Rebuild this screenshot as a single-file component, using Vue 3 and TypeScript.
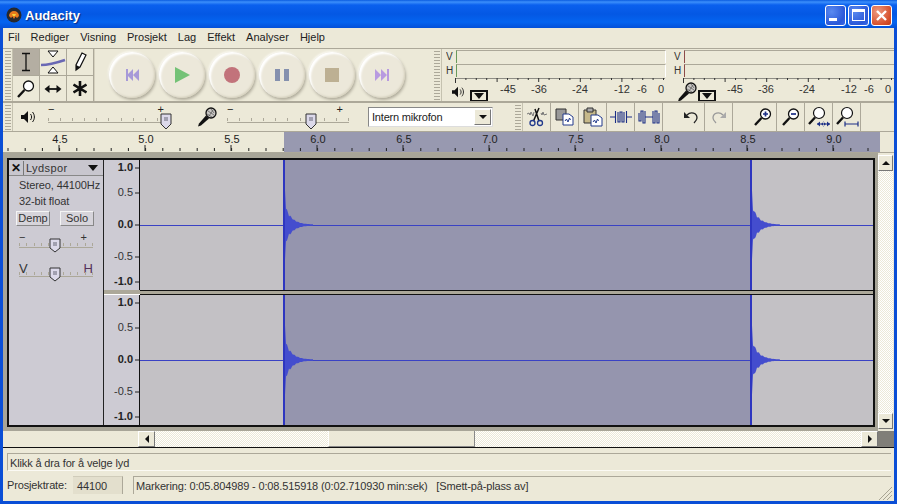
<script setup lang="ts">
const menus = ["Fil", "Rediger", "Visning", "Prosjekt", "Lag", "Effekt", "Analyser", "Hjelp"];
const meterLabels = [
  { t: "-45", x: 66 },
  { t: "-36", x: 97 },
  { t: "-24", x: 138 },
  { t: "-12", x: 180 },
  { t: "-6", x: 200 },
  { t: "0", x: 219 },
];
const meterTicks = Array.from({ length: 21 }, (_, i) => i * 10.4);

// ruler: 86px per half second, 4.5 sits at x=59
const rulerLabels = [4.5, 5, 5.5, 6, 6.5, 7, 7.5, 8, 8.5, 9].map((v, i) => ({
  text: v.toFixed(1),
  x: 59 + i * 86,
}));
const rulerTicks = Array.from({ length: 52 }, (_, i) => 8 + i * 17.2);
const sliderTicks = [0, 1, 2, 3, 4, 5, 6, 7, 8, 9, 10];

const axis = [
  { text: "1.0", y: 7, bold: true },
  { text: "0.5", y: 32, bold: false },
  { text: "0.0", y: 64, bold: true },
  { text: "-0.5", y: 96, bold: false },
  { text: "-1.0", y: 121, bold: true },
];

// decaying click, mirrored around the centre line
function spike(x0: number, seed: number) {
  const top: string[] = [];
  const bottom: string[] = [];
  for (let i = 0; i < 30; i++) {
    const env = i < 2 ? 34 : 24 * Math.exp(-i / 6.5);
    const wob = i < 2 ? 1 : 0.72 + 0.28 * Math.abs(Math.sin(i * 2.3 + seed));
    const h = Number((env * wob + 0.4).toFixed(1));
    top.push(`${x0 + i},${65 - h}`);
    bottom.unshift(`${x0 + i},${65 + h}`);
  }
  return [...top, ...bottom].join(" ");
}
const spikes = [spike(144, 1), spike(611, 2)];
</script>

<template>
  <div class="window">
    <header class="titlebar">
      <svg class="app-icon" width="16" height="16" viewBox="0 0 16 16">
        <circle cx="8" cy="8" r="7.5" fill="#26282e" />
        <path d="M3 9a5 5 0 0 1 10 0l-2 2-1.500-1.500L8 12 6.500 9.500 5 11z" fill="#e8791c" />
        <path d="M6 7h4l-1 2H7z" fill="#f6d53a" />
      </svg>
      <span class="title">Audacity</span>
      <div class="win-buttons">
        <button class="win-btn"><i class="min"></i></button>
        <button class="win-btn"><i class="max"></i></button>
        <button class="win-btn close">
          <svg width="13" height="13" viewBox="0 0 13 13"><path d="M2 2l9 9M11 2l-9 9" stroke="#fff" stroke-width="2.400" /></svg>
        </button>
      </div>
    </header>

    <div class="client">
      <nav class="menubar">
        <span v-for="m in menus" :key="m">{{ m }}</span>
      </nav>

      <div class="row-one">
        <div class="grip"></div>
        <div class="tools">
          <button class="tool active">
            <svg width="14" height="20" viewBox="0 0 14 20"><path d="M3 1.500h8M3 18.500h8M7 1.500v17" stroke="#111" stroke-width="1.300" fill="none" /></svg>
          </button>
          <button class="tool">
            <svg width="26" height="24" viewBox="0 0 26 24">
              <path d="M8 1h10l-5 6zM8 23h10l-5-6z" fill="#fff" stroke="#111" />
              <path d="M1 15c8 0 15-2 24-5" stroke="#6a68b4" stroke-width="2.600" fill="none" />
            </svg>
          </button>
          <button class="tool">
            <svg width="14" height="20" viewBox="0 0 14 20"><path d="M9 1l4 2-6 12-4 3 0-5z" fill="#fff" stroke="#111" stroke-width="1.200" /><path d="M3 13l4 2-4 3z" fill="#111" /></svg>
          </button>
          <button class="tool">
            <svg width="20" height="20" viewBox="0 0 20 20"><circle cx="12.500" cy="7" r="5" fill="#fff" stroke="#111" stroke-width="1.300" /><path d="M8.500 11L2 18" stroke="#111" stroke-width="2.400" /></svg>
          </button>
          <button class="tool">
            <svg width="18" height="10" viewBox="0 0 18 10"><path d="M4 5h10" stroke="#111" stroke-width="1.800" /><path d="M0.500 5L5.500 1v8zM17.500 5l-5-4v8z" fill="#111" /></svg>
          </button>
          <button class="tool">
            <svg width="14" height="15" viewBox="0 0 14 15"><path d="M7 0v15M0.500 3.500l13 8M13.500 3.500l-13 8" stroke="#111" stroke-width="2.600" /></svg>
          </button>
        </div>

        <div class="transport">
          <button class="round">
            <svg width="14" height="14" viewBox="0 0 14 14"><path d="M1 1h2v12H1zM14 1v12L8 7zM8 1v12L2 7z" fill="#a79ad8" /></svg>
          </button>
          <button class="round">
            <svg width="16" height="16" viewBox="0 0 16 16"><path d="M1 0l15 8-15 8z" fill="#74c276" /></svg>
          </button>
          <button class="round">
            <svg width="16" height="16" viewBox="0 0 16 16"><circle cx="8" cy="8" r="8" fill="#c2737b" /></svg>
          </button>
          <button class="round">
            <svg width="14" height="14" viewBox="0 0 14 14"><path d="M0 1h5v12H0zM9 1h5v12H9z" fill="#8590ae" /></svg>
          </button>
          <button class="round">
            <svg width="14" height="14" viewBox="0 0 14 14"><rect width="14" height="14" fill="#bdb093" /></svg>
          </button>
          <button class="round">
            <svg width="14" height="14" viewBox="0 0 14 14"><path d="M0 1v12l6-6zM6 1v12l6-6zM12 1h2v12h-2z" fill="#b89ae0" /></svg>
          </button>
        </div>

        <div class="grip meter-grip"></div>

        <div class="meter-group">
          <div class="meter">
            <div class="meter-bars">
              <div class="bar-row"><span>V</span><div class="bar green"></div></div>
              <div class="bar-row"><span>H</span><div class="bar green"></div></div>
            </div>
            <svg class="meter-scale" width="240" height="26" viewBox="0 0 240 26">
              <path d="M13.500 0v5M13.500 0H223" stroke="#333" fill="none" />
              <path v-for="t in meterTicks" :key="t" :d="`M${13.500 + t} 0v${t % 41.6 < 0.01 ? 4 : 2}`" stroke="#333" />
              <text v-for="l in meterLabels" :key="l.t" :x="l.x" y="15" class="scale-text">{{ l.t }}</text>
            </svg>
            <svg class="meter-icon speaker" width="12" height="12" viewBox="0 0 14 14">
              <path d="M0 5h3l4-4v12l-4-4H0z" fill="#111" /><path d="M9.500 4c1.500 2 1.500 4 0 6M11.500 2c2.500 3 2.500 7 0 10" stroke="#111" fill="none" />
            </svg>
            <div class="drop"><i></i></div>
          </div>
          <div class="meter second">
            <div class="meter-bars">
              <div class="bar-row"><span>V</span><div class="bar red"></div></div>
              <div class="bar-row"><span>H</span><div class="bar red"></div></div>
            </div>
            <svg class="meter-scale" width="240" height="26" viewBox="0 0 240 26">
              <path d="M13.500 0v5M13.500 0H240" stroke="#333" fill="none" />
              <path v-for="t in meterTicks" :key="t" :d="`M${13.500 + t} 0v${t % 41.6 < 0.01 ? 4 : 2}`" stroke="#333" />
              <text v-for="l in meterLabels" :key="l.t" :x="l.x - 1" y="15" class="scale-text">{{ l.t }}</text>
            </svg>
            <svg class="meter-icon mic" width="20" height="20" viewBox="0 0 20 20">
              <path d="M1 19.500l1-3 7-8 3 3-8 7z" fill="#111" />
              <circle cx="14" cy="6" r="5" fill="#c9c7c4" stroke="#111" stroke-width="1.300" />
              <path d="M11 4l6 4M12 9l4-6M10 7l5 3M14 2l3 4" stroke="#555" stroke-width="0.700" />
            </svg>
            <div class="drop"><i></i></div>
          </div>
        </div>
      </div>

      <div class="row-two">
        <div class="grip"></div>
        <svg class="vol-icon" width="14" height="14" viewBox="0 0 14 14">
          <path d="M0 5h3l4-4v12l-4-4H0z" fill="#111" /><path d="M9.500 4c1.500 2 1.500 4 0 6M11.500 2c2.500 3 2.500 7 0 10" stroke="#111" fill="none" />
        </svg>
        <div class="slider out-slider">
          <span class="sign minus">−</span><span class="sign plus">+</span>
          <div class="slider-track"><i v-for="n in sliderTicks" :key="n"></i></div>
          <svg class="thumb out-thumb" width="12" height="17" viewBox="0 0 12 17"><path d="M1 1h10v10l-5 5-5-5z" fill="#dcd9ea" stroke="#333" /><path d="M4 5h4M4 7h4" stroke="#667" /></svg>
        </div>
        <svg class="mic-icon" width="20" height="20" viewBox="0 0 20 20">
          <path d="M1 19.500l1-3 7-8 3 3-8 7z" fill="#111" />
          <circle cx="14" cy="6" r="5" fill="#c9c7c4" stroke="#111" stroke-width="1.300" />
          <path d="M11 4l6 4M12 9l4-6M10 7l5 3M14 2l3 4" stroke="#555" stroke-width="0.700" />
        </svg>
        <div class="slider in-slider">
          <span class="sign minus">−</span><span class="sign plus">+</span>
          <div class="slider-track"><i v-for="n in sliderTicks" :key="n"></i></div>
          <svg class="thumb in-thumb" width="12" height="17" viewBox="0 0 12 17"><path d="M1 1h10v10l-5 5-5-5z" fill="#dcd9ea" stroke="#333" /><path d="M4 5h4M4 7h4" stroke="#667" /></svg>
        </div>
        <div class="combo">
          <span>Intern mikrofon</span>
          <div class="combo-btn"><i></i></div>
        </div>
        <div class="grip edit-grip"></div>
        <div class="edit-buttons">
          <button class="edit">
            <svg width="20" height="20" viewBox="0 0 20 20">
              <path d="M0 7l2-1 1 2 1-3 2 4 1-4M14 6l1 2 1-3 1 3 3-1" stroke="#777" fill="none" />
              <path d="M12 1L6.500 14M8 2l4 12" stroke="#111" stroke-width="1.500" />
              <circle cx="5.500" cy="16" r="2.500" fill="none" stroke="#223a8c" stroke-width="1.300" /><circle cx="13" cy="16" r="2.500" fill="none" stroke="#223a8c" stroke-width="1.300" />
            </svg>
          </button>
          <button class="edit">
            <svg width="20" height="18" viewBox="0 0 20 18">
              <path d="M1 1h10v11H1z" fill="#999" stroke="#333" /><path d="M8 6h6l4 3v8H8z" fill="#fff" stroke="#223a8c" />
              <path d="M10 13l1.500-2 1.500 3 1.500-4 1 2" stroke="#223a8c" fill="none" />
            </svg>
          </button>
          <button class="edit">
            <svg width="20" height="20" viewBox="0 0 20 20">
              <path d="M1 3h12v13H1z" fill="#c6b98a" stroke="#333" /><path d="M4 1h6v4H4z" fill="#aaa" stroke="#333" />
              <path d="M8 8h7l4 3v8H8z" fill="#fff" stroke="#223a8c" /><path d="M10 15l1.500-2 1.500 3 1.500-4 1 2" stroke="#223a8c" fill="none" />
            </svg>
          </button>
          <button class="edit">
            <svg width="22" height="16" viewBox="0 0 22 16"><path d="M0 8h5M17 8h5M5.500 2v12M16.500 2v12M8 3v10h2V3h2v10h2V3" stroke="#1c2f86" stroke-width="1.100" fill="none" /></svg>
          </button>
          <button class="edit">
            <svg width="22" height="16" viewBox="0 0 22 16"><path d="M7 8h8M1 4v8h2V2h2v12h2V2M15 2v12h2V2h2v12h2V4" stroke="#1c2f86" stroke-width="1.100" fill="none" /></svg>
          </button>
        </div>
        <div class="edit-buttons undo-group">
          <button class="edit">
            <svg width="16" height="14" viewBox="0 0 16 14"><path d="M4 5c4-4 10-2 10 3 0 2-1 3-3 5" stroke="#222" stroke-width="1.300" fill="none" /><path d="M1 2v6h6z" fill="#222" /></svg>
          </button>
          <button class="edit">
            <svg width="16" height="14" viewBox="0 0 16 14"><path d="M12 5C8 1 2 3 2 8c0 2 1 3 3 5" stroke="#999" stroke-width="1.300" fill="none" /><path d="M15 2v6H9z" fill="#aaa" /></svg>
          </button>
        </div>
        <div class="edit-buttons zoom-group">
          <button class="edit">
            <svg width="20" height="20" viewBox="0 0 20 20"><circle cx="12.500" cy="7" r="5" fill="#fff" stroke="#111" stroke-width="1.300" /><path d="M10 7h5M12.500 4.500v5" stroke="#1c2f86" stroke-width="1.700" /><path d="M8.500 11L2 18" stroke="#111" stroke-width="2.400" /></svg>
          </button>
          <button class="edit">
            <svg width="20" height="20" viewBox="0 0 20 20"><circle cx="12.500" cy="7" r="5" fill="#fff" stroke="#111" stroke-width="1.300" /><path d="M10 7h5" stroke="#1c2f86" stroke-width="1.700" /><path d="M8.500 11L2 18" stroke="#111" stroke-width="2.400" /></svg>
          </button>
          <button class="edit">
            <svg width="24" height="22" viewBox="0 0 24 22"><circle cx="12" cy="7" r="5.500" fill="#fff" stroke="#111" stroke-width="1.200" /><path d="M8 11.500L2 18" stroke="#111" stroke-width="2.400" /><path d="M10 18h13" stroke="#1c2f86" /><path d="M14 18l3-2.500v5zM19 18l-3-2.500v5zM10 18l3-2.500v5zM23 18l-3-2.500v5z" fill="#1c2f86" /></svg>
          </button>
          <button class="edit">
            <svg width="24" height="22" viewBox="0 0 24 22"><circle cx="12" cy="7" r="5.500" fill="#fff" stroke="#111" stroke-width="1.200" /><path d="M8 11.500L2 18" stroke="#111" stroke-width="2.400" /><path d="M10 18h13M10 15.500v5M23 15.500v5" stroke="#1c2f86" stroke-width="1.200" /></svg>
          </button>
        </div>
      </div>

      <div class="ruler-row">
        <svg class="ruler" width="877" height="20" viewBox="0 0 877 20">
          <rect x="281" y="0" width="596" height="20" fill="#9899b0" />
          <path v-for="t in rulerTicks" :key="t" :d="`M${t - 3} 16v3`" stroke="#222" />
          <path v-for="l in rulerLabels" :key="l.text" :d="`M${l.x - 3} 13v6`" stroke="#222" />
          <text v-for="l in rulerLabels" :key="l.text" :x="l.x - 2" y="11" class="ruler-text">{{ l.text }}</text>
        </svg>
      </div>

      <div class="main">
        <div class="track-area">
          <div class="track">
            <div class="label-panel">
              <div class="label-head">
                <span class="close-x">✕</span>
                <span class="track-name">Lydspor</span>
                <i class="track-arrow"></i>
              </div>
              <p class="info">Stereo, 44100Hz</p>
              <p class="info">32-bit float</p>
              <div class="mute-solo">
                <button>Demp</button>
                <button>Solo</button>
              </div>
              <div class="slider gain">
                <span class="sign minus">−</span><span class="sign plus">+</span>
                <div class="slider-track short"><i v-for="n in sliderTicks" :key="n"></i></div>
                <svg class="thumb mid-thumb" width="12" height="15" viewBox="0 0 12 15"><path d="M1 1h10v9l-5 4-5-4z" fill="#dcd9ea" stroke="#333" /><path d="M4 5h4M4 7h4" stroke="#667" /></svg>
              </div>
              <div class="slider pan">
                <span class="pan-v">V</span><span class="pan-h">H</span>
                <div class="slider-track short"><i v-for="n in sliderTicks" :key="n"></i></div>
                <svg class="thumb mid-thumb" width="12" height="15" viewBox="0 0 12 15"><path d="M1 1h10v9l-5 4-5-4z" fill="#dcd9ea" stroke="#333" /><path d="M4 5h4M4 7h4" stroke="#667" /></svg>
              </div>
            </div>

            <div class="channels">
              <template v-for="ch in [0, 1]" :key="ch">
                <div class="channel">
                  <div class="vruler">
                    <svg width="36" height="130" viewBox="0 0 36 130">
                      <text v-for="a in axis" :key="a.text" x="29" :y="a.y + 4" text-anchor="end" class="axis-text" :class="{ strong: a.bold }">{{ a.text }}</text>
                      <path v-for="a in axis" :key="a.y" :d="`M31 ${a.y + 1}h5`" stroke="#222" />
                    </svg>
                  </div>
                  <svg class="wave" width="733" height="130" viewBox="0 0 733 130">
                    <rect width="733" height="130" fill="#c3c1c5" />
                    <rect x="144" width="467" height="130" fill="#9595ae" />
                    <path d="M0 65.500h733" stroke="#3a42c4" />
                    <polygon v-for="(s, i) in spikes" :key="i" :points="s" fill="#444dce" />
                    <path d="M144 0v130M611 0v130" stroke="#2e36c0" stroke-width="2" />
                  </svg>
                </div>
                <div v-if="ch === 0" class="divider">
                  <div class="divider-ruler"></div>
                  <div class="divider-wave"></div>
                </div>
              </template>
            </div>
          </div>
        </div>
        <div class="vscroll">
          <button class="sb-btn"><i class="up"></i></button>
          <div class="dither fill"></div>
          <button class="sb-btn"><i class="down"></i></button>
        </div>
      </div>

      <div class="hscroll">
        <div class="hscroll-pad"></div>
        <button class="sb-btn wide"><i class="left"></i></button>
        <div class="dither track-left"></div>
        <div class="sb-thumb"></div>
        <div class="dither fill"></div>
        <button class="sb-btn wide"><i class="right"></i></button>
        <div class="sb-corner"></div>
      </div>

      <div class="status">
        <div class="status-line">Klikk å dra for å velge lyd</div>
        <div class="status-bottom">
          <span class="rate-label">Prosjektrate:</span>
          <span class="rate-box">44100</span>
          <span class="sel-box">Markering: 0:05.804989 - 0:08.515918 (0:02.710930 min:sek) &nbsp; [Smett-på-plass av]</span>
        </div>
        <svg class="resize" width="18" height="18" viewBox="0 0 18 18">
          <path d="M4 17L17 4M8 17l9-9M12 17l5-5" stroke="#a8a594" fill="none" />
        </svg>
      </div>
    </div>
  </div>
</template>

<style>
html,
body {
  margin: 0;
  padding: 0;
}
</style>

<style scoped>
.window {
  width: 897px;
  height: 504px;
  display: flex;
  flex-direction: column;
  overflow: hidden;
  background: #0a4ed6;
  font-family: "Liberation Sans", Arial, sans-serif;
  font-size: 11px;
  color: #222;
}

button {
  padding: 0;
  border: 0;
  background: none;
  font: inherit;
  color: inherit;
}

p {
  margin: 0;
}

.titlebar {
  height: 28px;
  flex: 0 0 auto;
  display: flex;
  align-items: center;
  padding: 2px 5px 0 6px;
  box-sizing: border-box;
  background: linear-gradient(#0a5ce0 0, #3c8ffb 2px, #0a60ee 5px, #0458e4 14px, #0464f0 22px, #0350d8 28px);
}

.app-icon {
  margin-right: 3px;
}

.title {
  color: #fff;
  font-size: 13px;
  font-weight: 700;
  text-shadow: 1px 1px 1px #0a2a80;
}

.win-buttons {
  margin-left: auto;
  display: flex;
  gap: 2px;
}

.win-btn {
  width: 21px;
  height: 21px;
  box-sizing: border-box;
  border: 1px solid #fff;
  border-radius: 3px;
  background: radial-gradient(circle at 30% 30%, #5a8af0, #2a58d8 70%, #3a6ae8);
  display: flex;
  align-items: center;
  justify-content: center;
  position: relative;
}

.win-btn.close {
  background: radial-gradient(circle at 30% 30%, #ee9a80, #d6502c 70%, #c03c18);
}

.min {
  width: 8px;
  height: 3px;
  background: #fff;
  margin-top: 8px;
  margin-right: 5px;
}

.max {
  width: 13px;
  height: 12px;
  box-sizing: border-box;
  border: 1px solid #fff;
  border-top-width: 3px;
}

.client {
  flex: 1;
  min-height: 0;
  margin: 0 3px 3px;
  display: flex;
  flex-direction: column;
  background: #ece9d8;
}

.menubar {
  height: 20px;
  flex: 0 0 auto;
  display: flex;
  align-items: center;
  gap: 11px;
  padding: 0 0 2px 5px;
  box-sizing: border-box;
}

.row-one {
  height: 55px;
  flex: 0 0 auto;
  display: flex;
  box-sizing: border-box;
  border-top: 1px solid #aca899;
  border-bottom: 2px solid #aca899;
}

.grip {
  width: 10px;
  flex: 0 0 auto;
  box-sizing: border-box;
  border-right: 1px solid #c5c2b0;
  background: repeating-linear-gradient(#ece9d8 0 2px, #aca899 2px 3px) center / 6px 100% no-repeat;
}

.tools {
  width: 81px;
  flex: 0 0 auto;
  display: grid;
  grid-template-columns: repeat(3, 27px);
  grid-template-rows: 27px 26px;
  border-right: 1px solid #d4d0be;
}

.tool {
  display: flex;
  align-items: center;
  justify-content: center;
  border-right: 1px solid #aca899;
  border-bottom: 1px solid #aca899;
  box-sizing: border-box;
}

.tool.active {
  background: #b4aea2;
}

.transport {
  width: 337px;
  flex: 0 0 auto;
  display: flex;
  align-items: center;
  gap: 4px;
  padding-left: 14px;
  box-sizing: border-box;
}

.round {
  width: 46px;
  height: 46px;
  border-radius: 50%;
  flex: 0 0 auto;
  display: flex;
  align-items: center;
  justify-content: center;
  background: #ece8da;
  box-shadow: inset 2px 2px 2px #fff, inset -1px -1px 2px #d4cfbc, 1px 2px 3px #b0ac9c, -1px -1px 2px #fbfaf4;
}

.meter-grip {
  margin-right: 4px;
}

.meter-group {
  flex: 1;
  display: flex;
  gap: 0;
  min-width: 0;
  overflow: hidden;
}

.meter {
  width: 228px;
  flex: 0 0 auto;
  position: relative;
  margin-left: -4px;
}

.meter.second {
  margin-left: 0;
  width: 240px;
}

.meter-bars {
  display: flex;
  flex-direction: column;
}

.bar-row {
  height: 14px;
  display: flex;
  align-items: center;
  padding-left: 4px;
  font-size: 10px;
  color: #333;
}

.bar-row span {
  width: 10px;
}

.bar {
  flex: 1;
  height: 13px;
  box-sizing: border-box;
  border-top: 1px solid #aca899;
  border-right: 1px solid #fff;
}

.bar.green {
  border-left: 1px solid #6a9a5c;
  margin-right: 4px;
}

.bar.red {
  border-left: 1px solid #8c4a4a;
  border-right: 2px solid #7a4a7a;
}

.meter-scale {
  display: block;
  margin-top: 1px;
}

.scale-text {
  font-size: 11px;
  fill: #333;
  font-family: "Liberation Sans", Arial, sans-serif;
  text-anchor: middle;
}

.meter-icon.speaker {
  position: absolute;
  left: 10px;
  top: 37px;
}

.meter-icon.mic {
  position: absolute;
  left: 7px;
  top: 33px;
}

.drop {
  position: absolute;
  left: 28px;
  top: 41px;
  width: 18px;
  height: 12px;
  box-sizing: border-box;
  border: 2px solid #111;
  background: #ece9d8;
  display: flex;
  justify-content: center;
  padding-top: 1px;
}

.meter.second .drop {
  left: 28px;
}

.drop i {
  width: 0;
  height: 0;
  border: 5px solid transparent;
  border-top: 6px solid #111;
}

.row-two {
  height: 29px;
  flex: 0 0 auto;
  display: flex;
  align-items: center;
  box-sizing: border-box;
  border-bottom: 1px solid #aca899;
}

.row-two > .grip {
  height: 100%;
}

.vol-icon {
  margin-left: 8px;
}

.slider {
  position: relative;
  height: 26px;
  flex: 0 0 auto;
}

.out-slider {
  width: 122px;
  margin-left: 13px;
}

.in-slider {
  width: 122px;
  margin-left: 10px;
}

.mic-icon {
  margin-left: 27px;
}

.sign {
  position: absolute;
  top: 0;
  font-size: 11px;
  line-height: 10px;
}

.minus {
  left: 0;
}

.plus {
  right: 6px;
}

.slider-track {
  position: absolute;
  left: 0;
  right: 0;
  top: 14px;
  height: 4px;
  border-bottom: 1px solid #aca899;
  display: flex;
  justify-content: space-between;
}

.slider-track i {
  width: 1px;
  height: 3px;
  background: #aca899;
}

.thumb {
  position: absolute;
}

.out-thumb {
  left: 112px;
  top: 9px;
}

.in-thumb {
  left: 78px;
  top: 9px;
}

.combo {
  width: 125px;
  height: 20px;
  flex: 0 0 auto;
  margin-left: 19px;
  box-sizing: border-box;
  border: 1px solid #7f9db9;
  border-color: #888 #ddd #ddd #888;
  background: #fff;
  display: flex;
  align-items: center;
  justify-content: space-between;
  padding: 0 1px 0 3px;
  font-size: 11px;
  letter-spacing: -0.2px;
}

.combo-btn {
  width: 17px;
  height: 16px;
  background: #ece9d8;
  box-sizing: border-box;
  border: 1px solid #888;
  border-color: #fff #777 #777 #fff;
  display: flex;
  align-items: center;
  justify-content: center;
}

.combo-btn i {
  width: 0;
  height: 0;
  border: 4px solid transparent;
  border-top: 4px solid #111;
  margin-top: 4px;
}

.edit-grip {
  margin-left: 20px;
  height: 100%;
}

.edit-buttons {
  display: flex;
  height: 100%;
}

.undo-group {
  margin-left: 14px;
}

.zoom-group {
  margin-left: 16px;
}

.edit {
  width: 28px;
  height: 100%;
  box-sizing: border-box;
  border-right: 1px solid #aca899;
  display: flex;
  align-items: center;
  justify-content: center;
}

.ruler-row {
  height: 20px;
  flex: 0 0 auto;
  border-bottom: 1px solid #aca899;
  box-sizing: content-box;
}

.ruler {
  display: block;
}

.ruler-text {
  font-size: 11px;
  fill: #222;
  font-family: "Liberation Sans", Arial, sans-serif;
  text-anchor: middle;
}

.main {
  flex: 0 0 278px;
  display: flex;
  min-height: 0;
}

.track-area {
  width: 875px;
  flex: 0 0 auto;
  box-sizing: border-box;
  padding: 5px 3px 4px 4px;
  background: #a8a598;
}

.track {
  height: 100%;
  box-sizing: border-box;
  border: 2px solid #111;
  display: flex;
  background: #c8c6cc;
}

.label-panel {
  width: 95px;
  flex: 0 0 auto;
  box-sizing: border-box;
  border-right: 1px solid #222;
  background: #cdcbd3;
  color: #333;
}

.label-head {
  height: 15px;
  display: flex;
  align-items: center;
  border-bottom: 1px solid #888;
  background: #c8c6ce;
}

.close-x {
  width: 14px;
  text-align: center;
  font-weight: 700;
  color: #111;
  border-right: 1px solid #777;
  font-size: 12px;
}

.track-name {
  flex: 1;
  padding-left: 2px;
  letter-spacing: 0.4px;
}

.track-arrow {
  width: 0;
  height: 0;
  border: 5px solid transparent;
  border-top: 6px solid #111;
  border-bottom-width: 0;
  margin-right: 5px;
}

.info {
  padding-left: 10px;
  margin-top: 2px;
  line-height: 14px;
  white-space: nowrap;
  letter-spacing: -0.1px;
}

.info + .info {
  margin-top: 2px;
}

.mute-solo {
  display: flex;
  gap: 10px;
  padding-left: 7px;
  margin-top: 3px;
}

.mute-solo button {
  width: 34px;
  height: 15px;
  box-sizing: border-box;
  background: #d6d4da;
  border: 1px solid #888;
  border-color: #f4f4f4 #888 #888 #f4f4f4;
  font-size: 11px;
  line-height: 13px;
  color: #333;
}

.gain,
.pan {
  width: 74px;
  margin-left: 10px;
}

.gain {
  margin-top: 6px;
}

.pan {
  margin-top: 3px;
}

.slider-track.short {
  top: 11px;
}

.mid-thumb {
  left: 30px;
  top: 6px;
}

.pan-v,
.pan-h {
  position: absolute;
  top: 0;
  font-size: 13px;
}

.pan-v {
  left: 0;
  color: #333;
}

.pan-h {
  right: 0;
  color: #54305a;
}

.channels {
  flex: 1;
  min-width: 0;
  display: flex;
  flex-direction: column;
}

.channel {
  height: 130px;
  flex: 0 0 auto;
  display: flex;
}

.divider {
  height: 5px;
  flex: 0 0 auto;
  display: flex;
}

.divider-ruler {
  width: 36px;
  flex: 0 0 auto;
  box-sizing: border-box;
  background: #aca899;
  border-bottom: 1px solid #fff;
}

.divider-wave {
  flex: 1;
  box-sizing: border-box;
  background: #aca899;
  border-top: 1px solid #111;
  border-bottom: 1px solid #111;
}

.vruler {
  width: 36px;
  flex: 0 0 auto;
  background: #cdcbd3;
  border-right: 1px solid #111;
  box-sizing: border-box;
  overflow: hidden;
}

.vruler svg,
.wave {
  display: block;
}

.axis-text {
  font-size: 11px;
  fill: #333;
  font-family: "Liberation Sans", Arial, sans-serif;
}

.axis-text.strong {
  font-weight: 700;
  fill: #222;
}

.vscroll {
  flex: 1;
  display: flex;
  flex-direction: column;
  padding: 2px 1px 2px 0;
  width: 16px;
  box-sizing: border-box;
}

.sb-btn {
  height: 16px;
  flex: 0 0 auto;
  background: #ece9d8;
  box-sizing: border-box;
  border: 1px solid #888;
  border-color: #fff #777 #777 #fff;
  display: flex;
  align-items: center;
  justify-content: center;
}

.sb-btn.wide {
  width: 17px;
  height: auto;
}

.sb-btn i {
  width: 0;
  height: 0;
  border: 4px solid transparent;
}

.up {
  border-bottom-color: #111 !important;
  border-top-width: 0 !important;
}

.down {
  border-top-color: #111 !important;
  border-bottom-width: 0 !important;
}

.left {
  border-right-color: #111 !important;
  border-left-width: 0 !important;
}

.right {
  border-left-color: #111 !important;
  border-right-width: 0 !important;
}

.dither {
  background: repeating-conic-gradient(#ece9d8 0 25%, #fff 0 50%) 0 0 / 2px 2px;
}

.fill {
  flex: 1;
  min-width: 0;
}

.hscroll {
  height: 17px;
  flex: 0 0 auto;
  display: flex;
  box-sizing: border-box;
  border-bottom: 1px solid #111;
}

.hscroll-pad {
  width: 135px;
  flex: 0 0 auto;
}

.track-left {
  width: 173px;
  flex: 0 0 auto;
}

.sb-thumb {
  width: 147px;
  flex: 0 0 auto;
  background: #ece9d8;
  box-sizing: border-box;
  border-bottom: 1px solid #888;
  border-left: 1px solid #fff;
  border-right: 1px solid #888;
}

.sb-corner {
  width: 16px;
  flex: 0 0 auto;
  background: #807e78;
}

.status {
  flex: 1;
  position: relative;
  padding: 5px 3px 0 4px;
  box-sizing: border-box;
  color: #333;
  letter-spacing: -0.14px;
}

.status-line {
  height: 18px;
  line-height: 18px;
  padding-left: 2px;
  box-sizing: border-box;
  border-top: 1px solid #aca899;
  border-left: 1px solid #aca899;
  border-bottom: 1px solid #fbfaf4;
}

.status-bottom {
  display: flex;
  align-items: center;
  margin-top: 5px;
  height: 18px;
}

.rate-label {
  width: 66px;
  flex: 0 0 auto;
}

.rate-box {
  width: 50px;
  height: 18px;
  line-height: 18px;
  padding-left: 4px;
  box-sizing: border-box;
  flex: 0 0 auto;
  background: #e3dfcd;
  border-right: 1px solid #aca899;
  border-top: 1px solid #d0ccba;
}

.sel-box {
  flex: 1;
  margin-left: 10px;
  height: 18px;
  line-height: 18px;
  padding-left: 2px;
  box-sizing: border-box;
  white-space: nowrap;
  border-top: 1px solid #aca899;
  border-left: 1px solid #aca899;
}

.resize {
  position: absolute;
  right: 1px;
  bottom: 0;
}
</style>
